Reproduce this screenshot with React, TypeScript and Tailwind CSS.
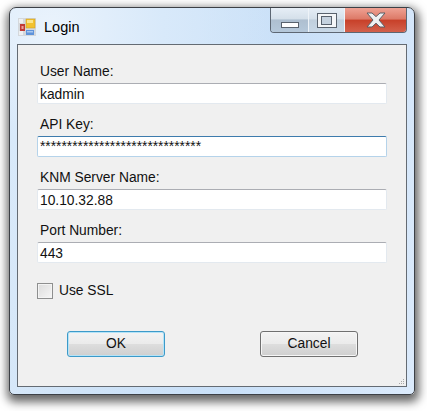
import React from 'react';

const font = "font-['Liberation_Sans',Arial,sans-serif]";

function Field({ label, value, focused }: { label: string; value: string; focused?: boolean }) {
  return (
    <div className="flex flex-col">
      <div className="h-[21px] pl-[3px] text-[13.8px] leading-[19px] text-[#111]">{label}</div>
      <div
        className={
          focused
            ? 'h-[21px] rounded-[2px] border border-[#b5d3ea] border-t-[#3d7bad] bg-white pl-[2px] text-[13.8px] leading-[19px] text-[#111]'
            : 'h-[21px] rounded-[2px] border border-[#e3e9ef] border-t-[#abadb3] bg-white pl-[2px] text-[13.8px] leading-[21px] text-[#111]'
        }
      >
        {value}
      </div>
    </div>
  );
}

function AppIcon() {
  return (
    <svg width="18" height="18" viewBox="0 0 18 18" className="shrink-0">
      <rect x="0" y="0" width="18" height="18" fill="#d4d8dc" />
      <rect x="1" y="1" width="4" height="4" fill="#eef0f2" />
      <rect x="1" y="13" width="4" height="4" fill="#eef0f2" />
      <rect x="8" y="1" width="9" height="9" fill="#f2c230" stroke="#c99a1c" strokeWidth="0.5" />
      <rect x="9" y="2" width="6" height="3" fill="#fbe58a" />
      <rect x="2" y="6" width="5" height="7" fill="#c23a34" />
      <rect x="3.5" y="8" width="2" height="3" fill="#eca39c" />
      <rect x="8" y="12" width="8" height="5" fill="#5f93da" />
      <rect x="9" y="13" width="6" height="1.5" fill="#a9c8ef" />
    </svg>
  );
}

function CaptionButtons() {
  return (
    <div className="flex h-[25px] w-[137px] self-start overflow-hidden rounded-b-[4px] border border-t-0 border-[#5d6773]">
      <div className="flex w-[38px] items-end justify-center border-r border-[#eef3f8] bg-[linear-gradient(#e6eef6_0%,#d5e0ea_45%,#aebfd0_50%,#b5c8da_100%)] pb-[4px]">
        <div className="h-[6px] w-[18px] border border-[#59626d] bg-white" />
      </div>
      <div className="flex w-[36px] items-center justify-center border-r border-[#eef3f8] bg-[linear-gradient(#e6eef6_0%,#d5e0ea_45%,#c0cfdd_50%,#c8d8e7_100%)]">
        <div className="flex h-[15px] w-[20px] items-center justify-center border border-[#59626d] bg-[#f4f6f8]">
          <div className="h-[9px] w-[11px] border border-[#59626d] bg-[#c5d2df]" />
        </div>
      </div>
      <div className="flex flex-1 items-center justify-center bg-[linear-gradient(#efa294_0%,#dd7a68_45%,#c8412a_52%,#d3614c_100%)]">
        <svg width="20" height="16" viewBox="0 0 20 16">
          <path
            d="M1 1h5l4 3.6L14 1h5l-6 7 6 7h-5l-4-3.8L6 15H1l6-7z"
            fill="#eef0f2"
            stroke="#5a5f66"
            strokeWidth="1"
            strokeLinejoin="round"
          />
        </svg>
      </div>
    </div>
  );
}

function DialogButton({ label, isDefault }: { label: string; isDefault?: boolean }) {
  return (
    <div
      className={
        isDefault
          ? 'flex h-[26px] w-[98px] items-center justify-center rounded-[3px] border border-[#3c9ac9] bg-[linear-gradient(#f3f3f3_0%,#ebebeb_48%,#dddddd_52%,#cfcfcf_100%)] text-[13.8px] text-[#111] shadow-[inset_0_0_0_1px_#b5e3f7]'
          : 'flex h-[26px] w-[98px] items-center justify-center rounded-[3px] border border-[#707070] bg-[linear-gradient(#f3f3f3_0%,#ebebeb_48%,#dddddd_52%,#cfcfcf_100%)] text-[13.8px] text-[#111] shadow-[inset_0_0_0_1px_#f6f6f6]'
      }
    >
      {label}
    </div>
  );
}

export default function App() {
  return (
    <div className={`h-[411px] w-[427px] overflow-hidden bg-white pl-[9px] pt-[7px] ${font}`}>
      <div className="flex h-[388px] w-[406px] flex-col rounded-t-[7px] rounded-b-[5px] border border-[#3c4046] bg-[radial-gradient(circle_at_40px_20px,#eaf3fc_0%,#d8e9fa_22%,transparent_45%),linear-gradient(100deg,#dcebfa_0%,#cfe3f7_30%,#c9e0f8_60%,#dbeafb_100%)] px-[7px] pb-[7px] shadow-[1px_4px_10px_3px_rgba(0,0,0,0.6)]">
        {/* Title bar */}
        <div className="flex h-[36px] shrink-0 items-start justify-between">
          <div className="flex items-center gap-[8px] pl-[1px] pt-[9px] text-[14.5px] leading-[18px] text-black">
            <AppIcon />
            <span className="pt-[1px]">Login</span>
          </div>
          <CaptionButtons />
        </div>

        {/* Client area */}
        <div className="relative flex flex-1 flex-col border border-[#646b73] bg-[#f0f0f0] px-[19px] pt-[17px]">
          <div className="flex flex-col gap-[11px]">
            <Field label="User Name:" value="kadmin" />
            <Field label="API Key:" value="******************************" focused />
            <Field label="KNM Server Name:" value="10.10.32.88" />
            <Field label="Port Number:" value="443" />
          </div>

          <div className="mt-[19px] flex items-center gap-[6px]">
            <div className="h-[16px] w-[16px] border border-[#8e8f8f] bg-[linear-gradient(135deg,#dcdcdc,#f6f6f6)] shadow-[inset_0_0_0_1px_#f4f4f4]" />
            <span className="text-[13.8px] leading-[18px] text-[#111]">Use SSL</span>
          </div>

          <div className="mt-[31px] flex justify-between pl-[30px] pr-[29px]">
            <DialogButton label="OK" isDefault />
            <DialogButton label="Cancel" />
          </div>

          {/* Resize grip */}
          <svg width="6" height="6" viewBox="0 0 6 6" className="absolute bottom-[1px] right-[1px]">
            <rect x="4" y="0" width="1" height="1" fill="#a8a8a8" />
            <rect x="2" y="2" width="1" height="1" fill="#a8a8a8" />
            <rect x="4" y="2" width="1" height="1" fill="#a8a8a8" />
            <rect x="0" y="4" width="1" height="1" fill="#a8a8a8" />
            <rect x="2" y="4" width="1" height="1" fill="#a8a8a8" />
            <rect x="4" y="4" width="1" height="1" fill="#a8a8a8" />
          </svg>
        </div>
      </div>
    </div>
  );
}
